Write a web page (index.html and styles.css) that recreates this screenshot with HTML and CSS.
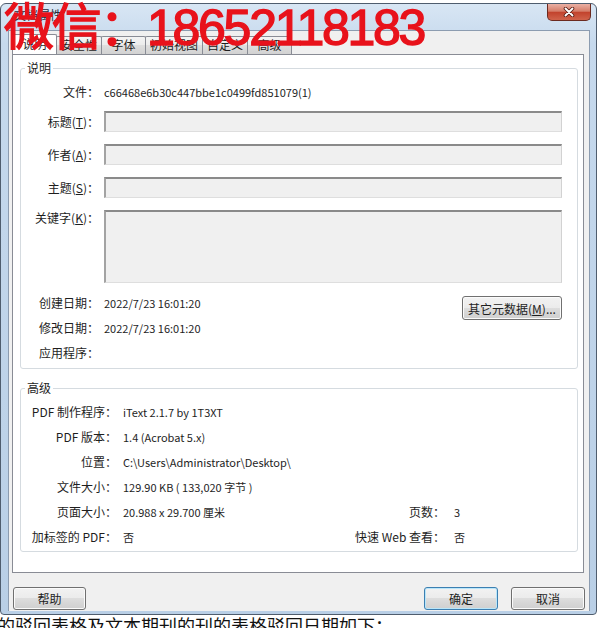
FILE: index.html
```html
<!DOCTYPE html>
<html lang="zh-CN">
<head>
<meta charset="utf-8">
<title>文档属性</title>
<link rel="stylesheet" href="styles.css">
</head>
<body>
<div class="screen">
  <div class="window">
    <div class="titlebar">
      <span class="title">文档属性</span>
      <div class="close">
        <svg width="12" height="10" viewBox="0 0 12 10"><path d="M2.5 1.5 L9.5 8.5 M9.5 1.5 L2.5 8.5" stroke="#5a1d14" stroke-width="3.6" stroke-linecap="round" fill="none"/><path d="M2.5 1.5 L9.5 8.5 M9.5 1.5 L2.5 8.5" stroke="#ffffff" stroke-width="1.9" stroke-linecap="round" fill="none"/></svg>
      </div>
    </div>
    <div class="client">
      <div class="tabs">
        <div class="tab active">说明</div>
        <div class="tab">安全性</div>
        <div class="tab">字体</div>
        <div class="tab">初始视图</div>
        <div class="tab">自定义</div>
        <div class="tab">高级</div>
      </div>
      <div class="panel">
        <div class="group desc">
          <div class="group-title">说明</div>
          <div class="row file"><span class="lbl">文件：</span><span class="val">c66468e6b30c447bbe1c0499fd851079(1)</span></div>
          <div class="row tb first"><span class="lbl">标题(<u>T</u>)：</span><div class="field"></div></div>
          <div class="row tb"><span class="lbl">作者(<u>A</u>)：</span><div class="field"></div></div>
          <div class="row tb"><span class="lbl">主题(<u>S</u>)：</span><div class="field"></div></div>
          <div class="row tb kw"><span class="lbl">关键字(<u>K</u>)：</span><div class="field"></div></div>
          <div class="dates">
            <div class="date-list">
              <div class="row drow"><span class="lbl">创建日期：</span><span class="val">2022/7/23 16:01:20</span></div>
              <div class="row drow"><span class="lbl">修改日期：</span><span class="val">2022/7/23 16:01:20</span></div>
              <div class="row drow"><span class="lbl">应用程序：</span><span class="val"></span></div>
            </div>
            <button class="btn meta">其它元数据(<u>M</u>)...</button>
          </div>
        </div>
        <div class="group adv">
          <div class="group-title">高级</div>
          <div class="adv-grid">
            <span class="lbl">PDF 制作程序：</span><span class="val">iText 2.1.7 by 1T3XT</span><span></span><span></span>
            <span class="lbl">PDF 版本：</span><span class="val">1.4 (Acrobat 5.x)</span><span></span><span></span>
            <span class="lbl">位置：</span><span class="val">C:\Users\Administrator\Desktop\</span><span></span><span></span>
            <span class="lbl">文件大小：</span><span class="val">129.90 KB ( 133,020 字节 )</span><span></span><span></span>
            <span class="lbl">页面大小：</span><span class="val">20.988 x 29.700 厘米</span><span class="lbl2">页数：</span><span class="val2">3</span>
            <span class="lbl">加标签的 PDF：</span><span class="val">否</span><span class="lbl2">快速 Web 查看：</span><span class="val2">否</span>
          </div>
        </div>
      </div>
      <div class="buttons">
        <button class="btn help">帮助</button>
        <span class="spacer"></span>
        <button class="btn default">确定</button>
        <button class="btn">取消</button>
      </div>
    </div>
  </div>
  <div class="doc">的驳回表格及文本期刊的刊的表格驳回日期如下：</div>
  <div class="watermark">微信：18652118183</div>
</div>
</body>
</html>
```
FILE: styles.css
```css
* { box-sizing: border-box; }
body { margin: 0; background: #fff; }

.screen {
  width: 600px;
  height: 628px;
  overflow: hidden;
  position: relative;
  font-family: "Noto Sans CJK SC", sans-serif;
  color: #1e1e1e;
}

.window {
  width: 597px;
  height: 612px;
  margin-top: 3px;
  border: 1px solid #4f5d6e;
  border-radius: 6px 6px 4px 4px;
  background: linear-gradient(#d8e6f4, #c6d9ed 40px, #b9cfe6);
  padding: 0 6px 3px 7px;
  display: flex;
  flex-direction: column;
}

.titlebar {
  height: 26px;
  display: flex;
  align-items: flex-start;
  flex: none;
}
.title {
  font-size: 12px;
  line-height: 22px;
  margin-left: 6px;
  color: #1e2a3a;
}
.close {
  margin-left: auto;
  margin-right: -1px;
  width: 44px;
  height: 17px;
  border: 1px solid #6b2a20;
  border-top: none;
  border-radius: 0 0 5px 5px;
  background: linear-gradient(#eab0a4, #d57d69 45%, #c2432d 52%, #d0634b);
  display: flex;
  align-items: center;
  justify-content: center;
}

.client {
  flex: 1;
  background: #f0f0f0;
  border: 1px solid #8c9cb0;
  border-bottom: none;
  padding: 3px 4px 0 3px;
  display: flex;
  flex-direction: column;
}

.tabs {
  display: flex;
  align-items: flex-end;
  height: 20px;
  flex: none;
}
.tab {
  height: 18px;
  min-width: 45px;
  margin-left: -1px;
  padding: 0 4px;
  text-align: center;
  font-size: 12px;
  line-height: 16px;
  border: 1px solid #898c95;
  border-bottom: none;
  border-radius: 2px 2px 0 0;
  background: linear-gradient(#f4f4f4, #ebebeb 50%, #dedede 50%, #d2d2d2);
}
.tab.active {
  margin-left: 0;
  height: 21px;
  margin-bottom: -1px;
  background: #fff;
  line-height: 18px;
}

.panel {
  background: #fff;
  border: 1px solid #898c95;
  margin-right: 1px;
  padding: 13px 5px 20px 7px;
}

.group {
  border: 1px solid #d5dbe0;
  border-radius: 3px;
}
.group-title {
  width: fit-content;
  margin: -9px 0 0 4px;
  padding: 0 2px;
  background: #fff;
  font-size: 12px;
  line-height: 16px;
}

.desc { padding: 0 15px 3px 0; }
.row { display: flex; align-items: center; }
.lbl {
  flex: none;
  width: 78px;
  text-align: right;
  white-space: nowrap;
  font-size: 12px;
  line-height: 16px;
}
.val {
  font-size: 11px;
  line-height: 16px;
  white-space: nowrap;
}
.desc .val { padding-left: 5px; }
.file { height: 32px; }
.tb { height: 21px; margin-top: 12px; }
.tb.first { margin-top: 3px; }
.kw { height: 73px; align-items: flex-start; }
.field {
  flex: 1;
  align-self: stretch;
  margin-left: 5px;
  background: #f0f0f0;
  border-top: 2px solid #8a8a8a;
  border-left: 2px solid #a3a3a3;
  border-right: 1px solid #d2d2d2;
  border-bottom: 1px solid #dedede;
}

.dates { display: flex; margin-top: 7px; }
.date-list { flex: 1; }
.drow { height: 25px; }

.btn {
  font-family: "Noto Sans CJK SC", sans-serif;
  font-size: 12px;
  color: #1e1e1e;
  width: 74px;
  height: 23px;
  padding: 0;
  border: 1px solid #707070;
  border-radius: 3px;
  background: linear-gradient(#f2f2f2, #ebebeb 50%, #dddddd 50%, #cfcfcf);
  box-shadow: inset 0 0 0 1px #fbfbfb;
}
.meta { width: 100px; height: 24px; margin-top: 6px; flex: none; }

.adv { padding: 0 0 2px 0; margin-top: 19px; }
.adv-grid {
  margin-top: 3px;
  display: grid;
  grid-template-columns: 96px 1fr auto 132px;
  grid-auto-rows: 25px;
  align-items: center;
}
.adv .lbl { width: auto; }
.adv .val { padding-left: 6px; }
.lbl2 { font-size: 12px; line-height: 16px; text-align: right; white-space: nowrap; }
.val2 { font-size: 11px; line-height: 16px; padding-left: 9px; }

.buttons {
  display: flex;
  gap: 13px;
  margin-top: 14px;
  flex: none;
}
.help { width: 73px; margin-left: 1px; }
.spacer { flex: 1; }
.btn.default {
  border-color: #3c7fb1;
  box-shadow: inset 0 0 0 1px #b9e6fa;
}

.doc {
  font-size: 18px;
  line-height: 20px;
  white-space: nowrap;
  margin-left: -3px;
  color: #111;
}

.watermark {
  position: absolute;
  left: 4px;
  top: 3px;
  font-family: "Liberation Sans", "Noto Sans CJK SC", sans-serif;
  font-size: 50px;
  line-height: 50px;
  letter-spacing: -2.3px;
  color: #e8121b;
  -webkit-text-stroke: 1.4px #e8121b;
  white-space: nowrap;
}
```
